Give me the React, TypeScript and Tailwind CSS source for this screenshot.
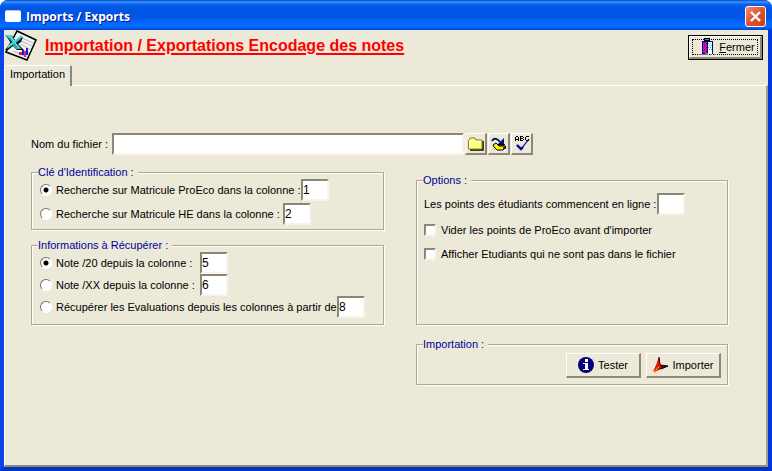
import { useState, type ReactNode } from "react";

const sunken =
  "border-2 border-t-[#8a8778] border-l-[#8a8778] border-r-[#f6f4ec] border-b-[#f6f4ec] bg-white";
const raised =
  "flex items-center justify-center bg-[#ece9d8] border-t border-l border-r-2 border-b-2 border-t-white border-l-white border-r-[#8c897a] border-b-[#8c897a]";

function ExcelIcon() {
  return (
    <svg width="33" height="32" viewBox="0 0 33 32" aria-hidden="true">
      <path d="M12 1 31 10 22 30 1 22Z" fill="#f4f4f4" stroke="#000" strokeWidth="1.6" />
      <path
        d="M15 7 28 13M14 10 27 16M15 14 25 19M13 18 24 23M8 21 22 27"
        stroke="#b4b4b4"
        strokeWidth="1"
      />
      <path d="M1 6h6l4 5 7-4 -2 5 -3 2 6 6h-7l-4-4 -5 4H0l6-7Z" fill="#000" />
      <path d="M0 5h6l4 5 7-5 -1 4 -5 4 6 6h-6l-3-4 -6 4 1-4 4-3Z" fill="#21b5b5" />
      <path d="M2 6h3l9 12M15 7 3 17" stroke="#8df0ec" strokeWidth="1" fill="none" />
      <path d="M14 22h3v3h-3z" fill="#e02030" />
      <path d="M17 20h2v5h-2zM21 18h2v7h-2z" fill="#1b1bd0" />
      <path d="M19 21h2v6h-2z" fill="#e31bbd" />
    </svg>
  );
}

function DoorIcon() {
  return (
    <svg
      width="18"
      height="18"
      viewBox="0 0 18 18"
      shapeRendering="crispEdges"
      className="shrink-0"
      aria-hidden="true"
    >
      <path d="M5 0h6v3H5z" fill="#000" />
      <path d="M6 1h4v1H6z" fill="#00c832" />
      <path d="M3 3h11v13H3z" fill="#000080" />
      <path d="M4 4h4v11H4z" fill="#c010b0" />
      <path
        d="M5 4h1v1H5zM7 5h1v1H7zM5 7h1v1H5zM7 9h1v1H7zM5 11h1v1H5zM7 13h1v1H7z"
        fill="#600060"
      />
      <path d="M9 4h4v12H9z" fill="#fff" />
      <path
        d="M9 5h1v1H9zM11 5h1v1h-1zM10 7h1v1h-1zM12 7h1v1h-1zM9 9h1v1H9zM11 9h1v1h-1zM10 11h1v1h-1zM12 11h1v1h-1z"
        fill="#20c8d8"
      />
      <path d="M0 16h9v1H0zM6 15h3v1H6zM11 16h2v1h-2zM15 16h2v1h-2z" fill="#77778c" />
    </svg>
  );
}

function FolderIcon() {
  return (
    <svg width="16" height="14" viewBox="0 0 16 14" aria-hidden="true">
      <path d="M2 13h13V4" fill="none" stroke="#000" strokeWidth="1.5" />
      <path
        d="M.5 3.5 2 2V1h5l1 2h6v9H.5Z"
        fill="#ffff80"
        stroke="#8a8600"
        strokeWidth="1"
      />
      <path d="M1.500 11V4.500H13" fill="none" stroke="#fff" strokeWidth="1" />
    </svg>
  );
}

function OpenIcon() {
  return (
    <svg width="16" height="14" viewBox="0 0 16 14" aria-hidden="true">
      <path d="M1 4C3 0 7 2 9 5" fill="none" stroke="#00106c" strokeWidth="1.8" />
      <path d="M13 1v7H6l3-3Z" fill="#00106c" />
      <path d="m2 8 3-2 3 3h6l1 1-3 3H6L3 10Z" fill="#ffee00" stroke="#000" strokeWidth="1" />
      <path d="M7 8h7M12 11h3" stroke="#000" strokeWidth="1.4" />
    </svg>
  );
}

function CheckIcon() {
  return (
    <svg width="16" height="17" viewBox="0 0 16 17" className="shrink-0" aria-hidden="true">
      <g fill="#000" shapeRendering="crispEdges">
        <path d="M2 1h2v1H2zM1 2h1v4H1zM4 2h1v4H4zM2 4h2v1H2z" />
        <path d="M6 1h3v1H6zM6 2h1v4H6zM9 2h1v1H9zM7 3h2v1H7zM9 4h1v1H9zM7 5h2v1H7z" />
        <path d="M12 1h3v1h-3zM11 2h1v3h-1zM12 5h3v1h-3z" />
      </g>
      <path d="m3 10 4 4 8-10" fill="none" stroke="#0000a0" strokeWidth="1.2" />
      <path d="m3 10 4 4 2-2" fill="none" stroke="#0000a0" strokeWidth="2.4" />
    </svg>
  );
}

function InfoIcon() {
  return (
    <svg width="16" height="16" viewBox="0 0 16 16" aria-hidden="true">
      <circle cx="8" cy="8" r="8" fill="#00007c" />
      <path d="M7 2h3v3H7zM5 6h5v6h1v1H5v-1h2V7H5z" fill="#fff" />
    </svg>
  );
}

function ArrowIcon() {
  return (
    <svg width="16" height="16" viewBox="0 0 16 16" aria-hidden="true">
      <path d="m6 8 9 1-7 3-7 3Z" fill="#7c0008" />
      <path d="M6 1v7l-5 6 3-7Z" fill="#ff1c1c" stroke="#e00000" strokeWidth="1" />
      <path d="M6 0 7 8l8 1" fill="none" stroke="#000" strokeWidth="1" />
      <path d="m8 12 7-3" stroke="#000" strokeWidth="1" />
      <path d="m1 15 6-6" stroke="#ff2a10" strokeWidth="2" />
      <path d="m1 15 5-5" stroke="#ffe000" strokeWidth="1" strokeDasharray="2 1" />
    </svg>
  );
}

function Group({ title, className, children }: { title: string; className: string; children: ReactNode }) {
  return (
    <fieldset
      className={`min-w-0 border border-[#aca899] shadow-[1px_1px_0_#fff,inset_1px_1px_0_#fff] ${className}`}
    >
      <legend className="ml-1.5 bg-[#ece9d8] pr-1 leading-3.5 text-[#00009c]">{title}</legend>
      {children}
    </fieldset>
  );
}

function SmallBox({ label, value }: { label: string; value: string }) {
  return (
    <input
      aria-label={label}
      defaultValue={value}
      className={`h-[22px] w-7 shrink-0 px-0 text-xs outline-none ${sunken}`}
    />
  );
}

type RadioRowProps = {
  name: string;
  label: string;
  value: string;
  checked: boolean;
  onSelect: () => void;
  textWidth: string;
};

function RadioRow({ name, label, value, checked, onSelect, textWidth }: RadioRowProps) {
  return (
    <div className="flex h-[22px] items-center">
      <label className={`flex items-center gap-1 whitespace-nowrap ${textWidth}`}>
        <input
          type="radio"
          name={name}
          checked={checked}
          onChange={onSelect}
          className="size-3 shrink-0 appearance-none rounded-full border border-t-[#77746a] border-r-white border-b-white border-l-[#77746a] bg-white checked:bg-[radial-gradient(circle,#000_2px,#fff_3px)]"
        />
        {label}
      </label>
      <SmallBox label={label} value={value} />
    </div>
  );
}

function CheckRow({ label }: { label: string }) {
  return (
    <label className="flex h-6 items-center gap-[5px] whitespace-nowrap">
      <input
        type="checkbox"
        className={`size-3 shrink-0 appearance-none checked:bg-[#404040] ${sunken}`}
      />
      {label}
    </label>
  );
}

export default function App() {
  const [key, setKey] = useState(0);
  const [info, setInfo] = useState(0);

  return (
    <div className="flex min-h-screen flex-col rounded-t-lg bg-[#0a3fe0] font-['Liberation_Sans',Arial,sans-serif] text-[11px] text-black">
      <header className="flex h-[30px] shrink-0 items-center gap-[5px] rounded-t-lg bg-[linear-gradient(#0548c8_0px,#3d95ff_2px,#0a63ee_4px,#0055e5_8px,#0055e5_17px,#0268fe_23px,#0268fe_27px,#0042c8_30px)] pt-0.5 pr-1.5 pl-[5px]">
        <span className="h-3 w-4 rounded-xs border-t border-[#9ec4ff] bg-white" />
        <h1 className="flex-1 pt-0.5 font-['Open_Sans',sans-serif] text-xs font-bold text-white [text-shadow:1px_1px_0_#0a1883]">
          Imports / Exports
        </h1>
        <button
          type="button"
          aria-label="Fermer la fenêtre"
          className="flex size-[21px] items-center justify-center rounded-[3px] border border-white bg-linear-to-br from-[#f0906e] via-[#e0522c] to-[#c8401c]"
        >
          <svg width="13" height="13" viewBox="0 0 13 13" aria-hidden="true">
            <path d="m2 2 9 9M11 2l-9 9" stroke="#fff" strokeWidth="2.400" />
          </svg>
        </button>
      </header>

      <div className="flex flex-1 flex-col border-x-4 border-b-4 border-r-[#0036dc] border-b-[#0033c8] border-l-[#0846e8] bg-[#ece9d8]">
        <div className="flex h-[35px] items-start pr-[5px] pl-px">
          <ExcelIcon />
          <h2 className="ml-[7px] flex-1 pt-[7px] text-base leading-[18px] font-bold whitespace-nowrap text-[#f00] underline decoration-2 underline-offset-2">
            Importation / Exportations Encodage des notes
          </h2>
          <button type="button" className="mt-[5px] h-[25px] w-[75px] border border-black">
            <span className={`h-full p-0.5 ${raised}`}>
              <span className="flex h-full w-full items-center justify-center gap-0.5 border border-dotted border-black pl-1">
                <DoorIcon />
                <span>
                  <span className="underline">F</span>ermer
                </span>
              </span>
            </span>
          </button>
        </div>

        <div role="tablist" className="flex h-5">
          <button
            type="button"
            role="tab"
            aria-selected="true"
            className="z-10 -mb-px h-[21px] w-[68px] rounded-t-xs border-t border-r-2 border-l border-t-white border-r-[#8c897a] border-l-white bg-[#ece9d8] pb-1 text-center"
          >
            Importation
          </button>
        </div>

        <main className="flex-1 border-t border-r-2 border-b-2 border-l border-t-white border-r-[#a19e8f] border-b-[#8c897a] border-l-white pt-[47px] pr-[38px] pb-6 pl-[26px]">
          <div className="flex items-center gap-px pr-[195px]">
            <label htmlFor="fichier" className="w-20 shrink-0 whitespace-nowrap">
              Nom du fichier :
            </label>
            <input id="fichier" className={`h-[22px] min-w-0 flex-1 px-0.5 text-xs outline-none ${sunken}`} />
            <button type="button" aria-label="Parcourir" className={`size-[22px] shrink-0 ${raised}`}>
              <FolderIcon />
            </button>
            <button type="button" aria-label="Ouvrir" className={`size-[22px] shrink-0 ${raised}`}>
              <OpenIcon />
            </button>
            <button type="button" aria-label="Vérifier" className={`size-[22px] shrink-0 ${raised}`}>
              <CheckIcon />
            </button>
          </div>

          <div className="mt-2.5 grid grid-cols-[353fr_312fr] gap-x-8">
            <div className="flex flex-col gap-2">
              <Group title="Clé d'Identification :" className="flex flex-col">
                <div className="flex flex-col gap-0.5 pb-1 pl-2">
                  <RadioRow
                    name="cle"
                    label="Recherche sur Matricule ProEco dans la colonne :"
                    value="1"
                    checked={key === 0}
                    onSelect={() => setKey(0)}
                    textWidth="w-[261px]"
                  />
                  <RadioRow
                    name="cle"
                    label="Recherche sur Matricule HE dans la colonne :"
                    value="2"
                    checked={key === 1}
                    onSelect={() => setKey(1)}
                    textWidth="w-[243px]"
                  />
                </div>
              </Group>
              <Group title="Informations à Récupérer :" className="flex flex-col">
                <div className="flex flex-col pb-1.5 pl-2">
                  <RadioRow
                    name="info"
                    label="Note /20 depuis la colonne :"
                    value="5"
                    checked={info === 0}
                    onSelect={() => setInfo(0)}
                    textWidth="w-40"
                  />
                  <RadioRow
                    name="info"
                    label="Note /XX depuis la colonne :"
                    value="6"
                    checked={info === 1}
                    onSelect={() => setInfo(1)}
                    textWidth="w-40"
                  />
                  <RadioRow
                    name="info"
                    label="Récupérer les Evaluations depuis les colonnes à partir de"
                    value="8"
                    checked={info === 2}
                    onSelect={() => setInfo(2)}
                    textWidth="w-[297px]"
                  />
                </div>
              </Group>
            </div>

            <Group title="Options :" className="mt-2">
              <div className="pt-1.5 pl-[7px]">
                <div className="mb-[3px] flex h-[22px] items-center">
                  <span className="w-[233px] whitespace-nowrap">
                    Les points des étudiants commencent en ligne :
                  </span>
                  <SmallBox label="Les points des étudiants commencent en ligne" value="" />
                </div>
                <CheckRow label="Vider les points de ProEco avant d'importer" />
                <CheckRow label="Afficher Etudiants qui ne sont pas dans le fichier" />
              </div>
            </Group>

            <Group title="Importation :" className="col-start-2 mt-3">
              <div className="flex justify-end gap-[5px] pt-0.5 pr-1.5 pb-1.5">
                <button type="button" className={`h-[25px] w-[75px] gap-1 ${raised}`}>
                  <InfoIcon />
                  Tester
                </button>
                <button type="button" className={`h-[25px] w-[75px] gap-1 ${raised}`}>
                  <ArrowIcon />
                  Importer
                </button>
              </div>
            </Group>
          </div>
        </main>
      </div>
    </div>
  );
}
